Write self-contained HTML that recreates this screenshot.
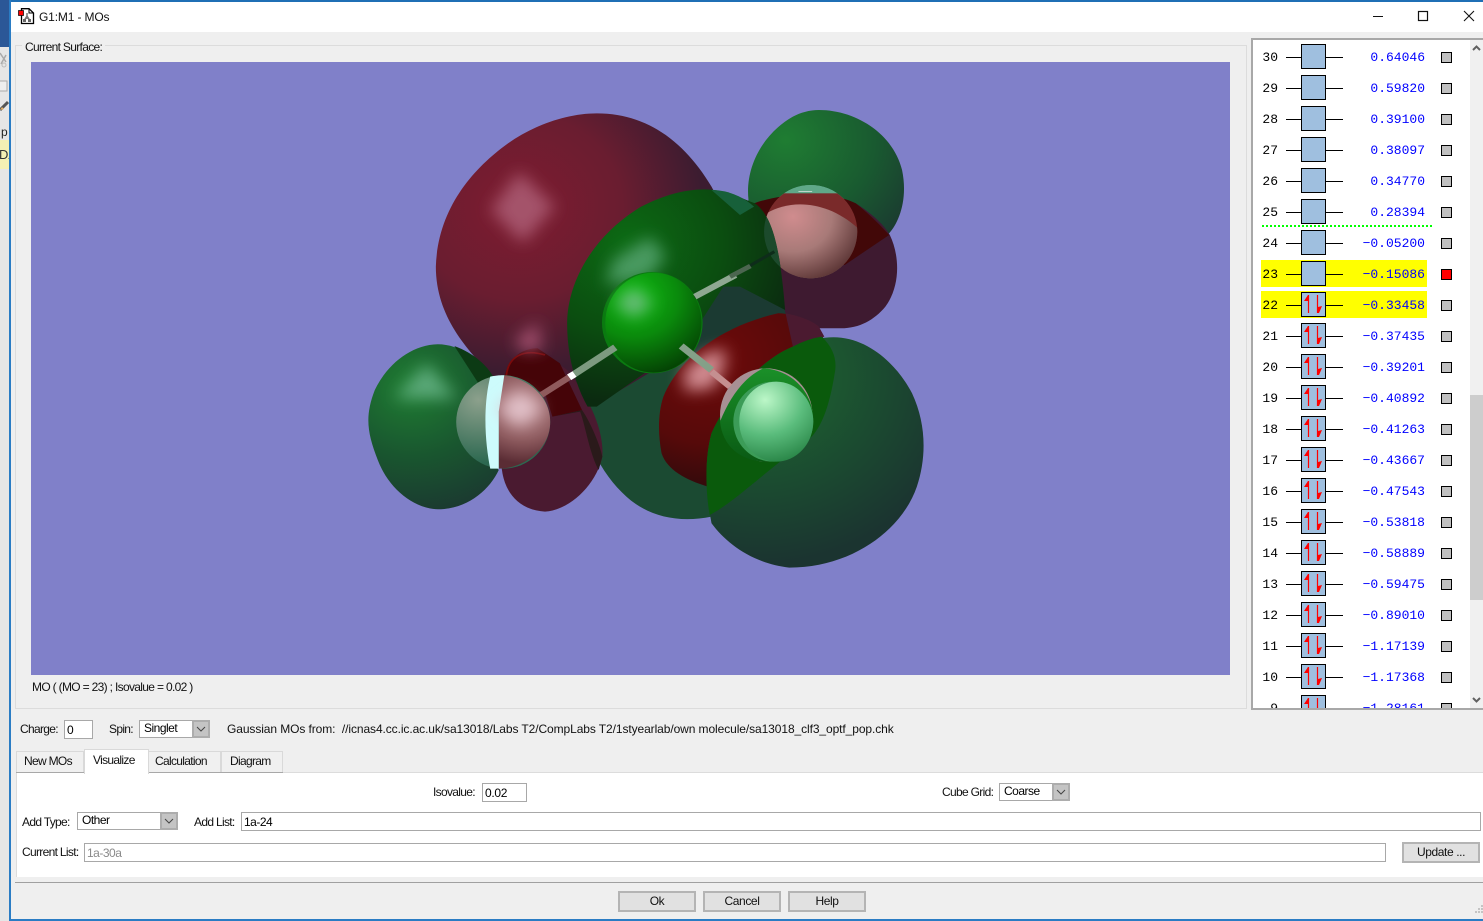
<!DOCTYPE html>
<html><head><meta charset="utf-8"><title>G1:M1 - MOs</title>
<style>
html,body{margin:0;padding:0;width:1483px;height:921px;overflow:hidden;background:#efefef;}
body{position:relative;font-family:"Liberation Sans",sans-serif;font-size:12px;color:#000;}
.a{position:absolute;box-sizing:border-box;}
.t{position:absolute;white-space:nowrap;line-height:14px;letter-spacing:-.68px;color:#111;}
.i{position:absolute;box-sizing:border-box;background:#fff;border:1px solid #a8a8a8;letter-spacing:-.5px;}
.cb{position:absolute;box-sizing:border-box;background:#c4c4c4;border:1px solid #adadad;border-width:2px;width:18px;}
.cb svg{position:absolute;left:2px;top:2px;}
.btn{position:absolute;box-sizing:border-box;background:#e1e1e1;border:2px solid #b4b4b4;text-align:center;line-height:17px;letter-spacing:-.4px;color:#111;}
.r{position:absolute;left:0;width:217px;height:24px;font-family:"Liberation Mono",monospace;font-size:13px;line-height:27px;}
.n{position:absolute;left:0;width:25px;text-align:right;color:#000;}
.l{position:absolute;left:33px;top:13px;width:57px;height:1px;background:#000;}
.b{position:absolute;left:48px;top:0;width:25px;height:25px;box-sizing:border-box;background:#9fbfdf;border:1px solid #000;}
.b svg{position:absolute;left:0;top:0;}
.v{position:absolute;left:90px;width:82px;text-align:right;color:#0000ff;}
.s{position:absolute;left:188px;top:8px;width:11px;height:11px;box-sizing:border-box;background:#c0c0c0;border:1px solid #000;}
.y{position:absolute;left:8px;width:166px;height:27px;background:#ffff00;}
</style></head><body>

<!-- background app fragment -->
<div class="a" style="left:0;top:0;width:10px;height:47px;background:#2b5797"></div>
<div class="a" style="left:0;top:47px;width:10px;height:874px;background:#e6e6e6"></div>
<div class="a" style="left:0;top:140px;width:10px;height:29px;background:#f4f0b4;overflow:hidden"><div class="t" style="left:-1px;top:8px;font-size:13px;color:#333;letter-spacing:0">DA</div></div>
<div class="t" style="left:1px;top:125px;color:#222;font-size:12px">p</div>
<svg class="a" style="left:0;top:50px" width="9" height="70"><path d="M0 3L6 12M6 5L1 14" stroke="#aaa" stroke-width="1.5" fill="none"/><circle cx="4" cy="15" r="2" fill="none" stroke="#bbb"/><rect x="-2" y="31" width="9" height="10" fill="#eee" stroke="#aaa"/><path d="M0 60L8 52" stroke="#555" stroke-width="3"/><path d="M0 60l2-3 2 2z" fill="#e8b060"/></svg>

<!-- window frame -->
<div class="a" style="left:9px;top:0;width:1474px;height:2px;background:#1f6fb5"></div>
<div class="a" style="left:9px;top:2px;width:1474px;height:30px;background:#fff"></div>
<div class="a" style="left:9px;top:0;width:1.5px;height:921px;background:#2a7cc4"></div>
<div class="a" style="left:9px;top:919px;width:1474px;height:2px;background:#2a7cc4"></div>

<svg class="a" style="left:18px;top:8px" width="17" height="17"><path d="M3.500 .7H11L15.500 5V15.500H3.500Z" fill="#fff" stroke="#000" stroke-width="1.300"/><path d="M11 .7V5H15.500" fill="none" stroke="#000"/><rect x=".5" y="2.500" width="5" height="5" fill="#f00" stroke="#000" stroke-width=".7"/><path d="M9 5V11M9 8L6.500 12M9 8L11.500 12" stroke="#777" stroke-width="1.500"/><rect x="5" y="11" width="3" height="3" fill="#666"/><rect x="10" y="11" width="3" height="3" fill="#666"/></svg>
<div class="t" style="left:39px;top:10px;font-size:12px;letter-spacing:-.15px">G1:M1 - MOs</div>
<svg class="a" style="left:1370px;top:8px" width="110" height="16"><path d="M3 8.500H13" stroke="#111"/><rect x="48.500" y="3.500" width="9" height="9" fill="none" stroke="#111" stroke-width="1.200"/><path d="M94 3L104 13M104 3L94 13" stroke="#111" stroke-width="1.100" fill="none"/></svg>

<!-- group box -->
<div class="a" style="left:15px;top:45px;width:1232px;height:664px;border:1px solid #dcdcdc"></div>
<div class="t" style="left:22px;top:40px;padding:0 3px;background:#efefef">Current Surface:</div>

<!-- GL canvas -->
<svg class="a" style="left:31px;top:62px" width="1199" height="613" viewBox="31 62 1199 613">
<defs>
<radialGradient id="rr" gradientUnits="userSpaceOnUse" cx="430" cy="320" r="620"><stop offset="0" stop-color="#7e1c30"/><stop offset=".45" stop-color="#6a1d30"/><stop offset=".8" stop-color="#3c1c30"/><stop offset="1" stop-color="#3a1b2e"/></radialGradient>
<radialGradient id="gl" gradientUnits="userSpaceOnUse" cx="140" cy="860" r="380"><stop offset="0" stop-color="#1f7d32"/><stop offset=".55" stop-color="#19562f"/><stop offset="1" stop-color="#1b3a30"/></radialGradient>
<radialGradient id="gu" gradientUnits="userSpaceOnUse" cx="1150" cy="120" r="400"><stop offset="0" stop-color="#1f7d32"/><stop offset=".6" stop-color="#195a30"/><stop offset="1" stop-color="#1b3a30"/></radialGradient>
<radialGradient id="gb" gradientUnits="userSpaceOnUse" cx="1080" cy="830" r="560"><stop offset="0" stop-color="#1d6a30"/><stop offset=".6" stop-color="#1b4a30"/><stop offset="1" stop-color="#1b3430"/></radialGradient>
<radialGradient id="gc" gradientUnits="userSpaceOnUse" cx="720" cy="430" r="480"><stop offset="0" stop-color="#0c6a14"/><stop offset=".55" stop-color="#0b4d10"/><stop offset="1" stop-color="#0b2a10"/></radialGradient>
<radialGradient id="rb" gradientUnits="userSpaceOnUse" cx="950" cy="780" r="420"><stop offset="0" stop-color="#6e0a0a"/><stop offset=".6" stop-color="#560a0a"/><stop offset="1" stop-color="#2a0a0c"/></radialGradient>
<radialGradient id="cl" gradientUnits="userSpaceOnUse" cx="740" cy="590" r="240"><stop offset="0" stop-color="#10bb12"/><stop offset=".5" stop-color="#0a8a0c"/><stop offset="1" stop-color="#044204"/></radialGradient>
<radialGradient id="ph" gradientUnits="userSpaceOnUse" cx="1170" cy="350" r="210"><stop offset="0" stop-color="#d08c8e"/><stop offset=".5" stop-color="#a87a78"/><stop offset="1" stop-color="#563030"/></radialGradient>
<radialGradient id="pl" gradientUnits="userSpaceOnUse" cx="440" cy="920" r="170"><stop offset="0" stop-color="#c89a9e"/><stop offset=".6" stop-color="#8d5a5e"/><stop offset="1" stop-color="#5a2c34"/></radialGradient>
<radialGradient id="ql" gradientUnits="userSpaceOnUse" cx="320" cy="900" r="190"><stop offset="0" stop-color="#8ca08c"/><stop offset="1" stop-color="#2c6850"/></radialGradient>
<radialGradient id="pg" gradientUnits="userSpaceOnUse" cx="1095" cy="900" r="210"><stop offset="0" stop-color="#bcf7c8"/><stop offset=".5" stop-color="#5abc7c"/><stop offset="1" stop-color="#1f7a3c"/></radialGradient>
<linearGradient id="og" gradientUnits="userSpaceOnUse" x1="1090" y1="810" x2="1090" y2="1085"><stop offset="0" stop-color="#1a8f28"/><stop offset="1" stop-color="#0a5a14"/></linearGradient>
<clipPath id="us"><ellipse cx="1218" cy="395" rx="126" ry="140"/></clipPath>
<filter id="bl" x="-80%" y="-80%" width="260%" height="260%"><feGaussianBlur stdDeviation="22"/></filter>
</defs>
<rect x="31" y="62" width="1199" height="613" fill="#8080c9"/>
<g transform="translate(360 100) scale(.37 .3333)">
<!-- lower-center green lobe -->
<path d="M590 880C600 1010 650 1120 720 1190C780 1250 860 1270 950 1250C1100 1210 1240 1020 1285 780L1150 640L900 560L660 800Z" fill="#1b4a32"/>
<!-- big red lobe -->
<path d="M640 40C780 40 880 130 950 260C1010 380 1000 600 930 720L660 900L590 880L360 830C290 750 205 650 205 500C210 330 300 210 400 130C470 75 560 40 640 40Z" fill="url(#rr)"/>
<path d="M900 670L960 500H1060L1170 640L1000 690L860 790Z" fill="#1b3a32"/>
<!-- left lower red -->
<path d="M410 780C460 735 500 760 560 810C610 880 660 980 655 1070C640 1150 570 1230 500 1235C430 1230 395 1180 385 1120C370 1020 375 880 410 780Z" fill="#4a1a30"/>
<path d="M520 950L600 930C625 970 650 1040 655 1070L645 1110C620 1060 610 980 595 935Z" fill="#2a1a1a"/>
<path d="M390 830C405 770 440 745 480 745L540 790L600 930L520 950L500 880Z" fill="#450408"/>
<path d="M395 830C400 770 440 745 500 765" fill="none" stroke="#7a0a0a" stroke-width="5"/>
<path d="M420 720L480 665L490 750L440 755Z" fill="#a04e6c" filter="url(#bl)"/>
<!-- left green lobe -->
<path d="M210 733C270 733 330 780 360 830C340 880 300 1000 375 1110C350 1170 290 1228 210 1228C140 1225 75 1160 48 1080C20 1000 12 950 40 870C75 790 140 735 210 733Z" fill="url(#gl)"/>
<path d="M255 738C310 760 345 800 360 830L320 850Z" fill="#0c3a14"/>
<path d="M180 790L260 895L95 895Z" fill="#5aa878" filter="url(#bl)"/>
<path d="M430 215L525 320L440 430L355 330Z" fill="#a4526a" filter="url(#bl)"/>
<!-- upper right green lobe -->
<path d="M1240 30C1340 30 1440 100 1465 210C1482 300 1455 370 1430 400L1150 560L1030 345L1050 300C1040 200 1090 100 1170 50C1190 38 1215 30 1240 30Z" fill="url(#gu)"/>
<!-- upper right red -->
<path d="M1065 310C1150 280 1280 280 1340 310C1390 345 1420 380 1432 405C1460 470 1460 560 1420 620C1390 660 1350 685 1300 685H1240L1150 640L1100 440Z" fill="#3e1a30"/>
<ellipse cx="1218" cy="395" rx="126" ry="140" fill="#5fa888"/>
<path d="M1065 310C1150 275 1280 275 1340 310C1380 345 1410 380 1430 405L1310 495L1140 440Z" fill="#420808"/>
<g clip-path="url(#us)">
<rect x="1080" y="278" width="280" height="270" fill="#7a2a2a"/>
<rect x="1080" y="240" width="280" height="40" fill="#5fa888"/>
<path d="M1099 340C1162 298 1261 300 1346 385V550H1085Z" fill="url(#ph)"/>
</g>
<path d="M1185 274H1222" stroke="#eee" stroke-width="2"/>
<!-- central green -->
<path d="M930 268C990 268 1030 295 1068 310C1115 350 1135 440 1149 630L1027 560H982L924 660L820 780L640 920L615 920C580 850 558 760 560 660C565 530 640 400 760 320C820 285 880 268 930 268Z" fill="url(#gc)"/>
<path d="M950 270C1000 270 1040 295 1065 320L1027 345Z" fill="#17603a"/>
<g clip-path="url(#us)"><path d="M1068 310C1115 350 1135 440 1149 630H1000V310Z" fill="#1c4a2c"/></g>
<path d="M785 410L825 470L780 535L665 555L685 480Z" fill="#4a9a60" filter="url(#bl)"/>
<!-- red bowl lower right -->
<path d="M1130 640C1180 640 1220 670 1250 710L1285 780C1280 920 1240 1010 1130 1090C1070 1130 1000 1165 940 1160C880 1140 830 1110 815 1060C805 1000 805 940 820 890C860 780 970 680 1130 640Z" fill="url(#rb)"/>
<path d="M1150 640C1195 650 1225 665 1240 680L1255 710L1170 740Z" fill="#4b1a30"/>
<!-- lower right green -->
<path d="M1280 712C1370 712 1450 790 1492 880C1530 970 1532 1070 1505 1160C1465 1290 1330 1403 1160 1403C1060 1390 990 1330 950 1270C935 1180 930 1080 950 1000C990 900 1080 780 1170 740C1210 720 1250 712 1280 712Z" fill="url(#gb)"/>
<path d="M1248 710C1280 745 1290 780 1283 820C1270 910 1250 980 1216 1015L1130 1090C1040 1170 990 1220 945 1245C935 1180 930 1080 950 1000C990 900 1080 780 1170 740C1195 725 1220 715 1248 710Z" fill="#0a5a0c"/>
<path d="M935 760L985 745L985 800L955 865L880 875L875 810Z" fill="#d08a90" filter="url(#bl)"/>
<!-- atoms -->
<ellipse cx="790" cy="668" rx="136" ry="152" fill="#0a7a10"/>
<ellipse cx="793" cy="668" rx="130" ry="150" fill="url(#cl)"/>
<path d="M740 560L790 610L740 655L690 610Z" fill="#6abc7c" filter="url(#bl)"/>
<ellipse cx="387" cy="966" rx="127" ry="140" fill="url(#ql)"/>
<path d="M375 826C440 826 514 880 514 966C514 1050 440 1106 375 1106Z" fill="url(#pl)"/>
<path d="M352 830C370 826 380 826 390 826L375 935V1106H352C340 1040 330 930 352 830Z" fill="#cdfbfc"/>
<path d="M430 875L490 925L430 980L375 925Z" fill="#e0c0c8" filter="url(#bl)"/>
<ellipse cx="1098" cy="945" rx="125" ry="140" fill="#a89094"/>
<path d="M973 965C1000 890 1040 830 1090 805C1170 810 1225 880 1225 960C1225 1040 1170 1085 1100 1085C1030 1085 980 1040 973 965Z" fill="url(#og)"/>
<ellipse cx="1117" cy="965" rx="108" ry="120" fill="#3c9c58"/>
<ellipse cx="1125" cy="965" rx="100" ry="120" fill="url(#pg)"/>
<!-- bonds -->
<path d="M905 592L1120 455" stroke="#0e2c1a" stroke-width="9"/>
<path d="M905 590L1015 525" stroke="#8fa892" stroke-width="18"/>
<path d="M1000 530L1055 498" stroke="#4c6650" stroke-width="14"/>
<path d="M690 742L580 822" stroke="#7d9a80" stroke-width="20"/>
<path d="M580 822L565 832" stroke="#fff" stroke-width="20"/>
<path d="M565 832L490 885" stroke="#8f5a5c" stroke-width="18"/>
<path d="M868 738L950 810" stroke="#84a088" stroke-width="20"/>
<path d="M950 815L1000 860" stroke="#c58f90" stroke-width="18"/>
</g>
</svg>

<div class="t" style="left:32px;top:680px;letter-spacing:-.67px">MO ( (MO = 23) ; Isovalue = 0.02 )</div>

<!-- MO list panel -->
<div class="a" style="left:1251px;top:38px;width:232px;height:672px;border:2px solid #a8a8a8;border-right:0;background:#fff;overflow:hidden">
<div class="y" style="left:8px;top:220px"></div>
<div class="y" style="left:8px;top:251px"></div>
<div class="a" style="left:9px;top:185px;width:170px;height:0;border-top:2px dotted #00ff00"></div>

<div class="r" style="top:4px"><span class="n">30</span><i class="l"></i><i class="b"></i><span class="v">0.64046</span><i class="s"></i></div>
<div class="r" style="top:35px"><span class="n">29</span><i class="l"></i><i class="b"></i><span class="v">0.59820</span><i class="s"></i></div>
<div class="r" style="top:66px"><span class="n">28</span><i class="l"></i><i class="b"></i><span class="v">0.39100</span><i class="s"></i></div>
<div class="r" style="top:97px"><span class="n">27</span><i class="l"></i><i class="b"></i><span class="v">0.38097</span><i class="s"></i></div>
<div class="r" style="top:128px"><span class="n">26</span><i class="l"></i><i class="b"></i><span class="v">0.34770</span><i class="s"></i></div>
<div class="r" style="top:159px"><span class="n">25</span><i class="l"></i><i class="b"></i><span class="v">0.28394</span><i class="s"></i></div>
<div class="r" style="top:190px"><span class="n">24</span><i class="l"></i><i class="b"></i><span class="v">−0.05200</span><i class="s"></i></div>
<div class="r" style="top:221px"><span class="n">23</span><i class="l"></i><i class="b"></i><span class="v">−0.15086</span><i class="s" style="background:#ff0000"></i></div>
<div class="r" style="top:252px"><span class="n">22</span><i class="l"></i><i class="b"><svg width="23" height="23"><path d="M6.500 2V20M15.500 2V20" stroke="#f00" stroke-width="1.200"/><path d="M6 2L2 8H6ZM16 20V14L20 13L17 20Z" fill="#f00"/></svg></i><span class="v">−0.33458</span><i class="s"></i></div>
<div class="r" style="top:283px"><span class="n">21</span><i class="l"></i><i class="b"><svg width="23" height="23"><path d="M6.500 2V20M15.500 2V20" stroke="#f00" stroke-width="1.200"/><path d="M6 2L2 8H6ZM16 20V14L20 13L17 20Z" fill="#f00"/></svg></i><span class="v">−0.37435</span><i class="s"></i></div>
<div class="r" style="top:314px"><span class="n">20</span><i class="l"></i><i class="b"><svg width="23" height="23"><path d="M6.500 2V20M15.500 2V20" stroke="#f00" stroke-width="1.200"/><path d="M6 2L2 8H6ZM16 20V14L20 13L17 20Z" fill="#f00"/></svg></i><span class="v">−0.39201</span><i class="s"></i></div>
<div class="r" style="top:345px"><span class="n">19</span><i class="l"></i><i class="b"><svg width="23" height="23"><path d="M6.500 2V20M15.500 2V20" stroke="#f00" stroke-width="1.200"/><path d="M6 2L2 8H6ZM16 20V14L20 13L17 20Z" fill="#f00"/></svg></i><span class="v">−0.40892</span><i class="s"></i></div>
<div class="r" style="top:376px"><span class="n">18</span><i class="l"></i><i class="b"><svg width="23" height="23"><path d="M6.500 2V20M15.500 2V20" stroke="#f00" stroke-width="1.200"/><path d="M6 2L2 8H6ZM16 20V14L20 13L17 20Z" fill="#f00"/></svg></i><span class="v">−0.41263</span><i class="s"></i></div>
<div class="r" style="top:407px"><span class="n">17</span><i class="l"></i><i class="b"><svg width="23" height="23"><path d="M6.500 2V20M15.500 2V20" stroke="#f00" stroke-width="1.200"/><path d="M6 2L2 8H6ZM16 20V14L20 13L17 20Z" fill="#f00"/></svg></i><span class="v">−0.43667</span><i class="s"></i></div>
<div class="r" style="top:438px"><span class="n">16</span><i class="l"></i><i class="b"><svg width="23" height="23"><path d="M6.500 2V20M15.500 2V20" stroke="#f00" stroke-width="1.200"/><path d="M6 2L2 8H6ZM16 20V14L20 13L17 20Z" fill="#f00"/></svg></i><span class="v">−0.47543</span><i class="s"></i></div>
<div class="r" style="top:469px"><span class="n">15</span><i class="l"></i><i class="b"><svg width="23" height="23"><path d="M6.500 2V20M15.500 2V20" stroke="#f00" stroke-width="1.200"/><path d="M6 2L2 8H6ZM16 20V14L20 13L17 20Z" fill="#f00"/></svg></i><span class="v">−0.53818</span><i class="s"></i></div>
<div class="r" style="top:500px"><span class="n">14</span><i class="l"></i><i class="b"><svg width="23" height="23"><path d="M6.500 2V20M15.500 2V20" stroke="#f00" stroke-width="1.200"/><path d="M6 2L2 8H6ZM16 20V14L20 13L17 20Z" fill="#f00"/></svg></i><span class="v">−0.58889</span><i class="s"></i></div>
<div class="r" style="top:531px"><span class="n">13</span><i class="l"></i><i class="b"><svg width="23" height="23"><path d="M6.500 2V20M15.500 2V20" stroke="#f00" stroke-width="1.200"/><path d="M6 2L2 8H6ZM16 20V14L20 13L17 20Z" fill="#f00"/></svg></i><span class="v">−0.59475</span><i class="s"></i></div>
<div class="r" style="top:562px"><span class="n">12</span><i class="l"></i><i class="b"><svg width="23" height="23"><path d="M6.500 2V20M15.500 2V20" stroke="#f00" stroke-width="1.200"/><path d="M6 2L2 8H6ZM16 20V14L20 13L17 20Z" fill="#f00"/></svg></i><span class="v">−0.89010</span><i class="s"></i></div>
<div class="r" style="top:593px"><span class="n">11</span><i class="l"></i><i class="b"><svg width="23" height="23"><path d="M6.500 2V20M15.500 2V20" stroke="#f00" stroke-width="1.200"/><path d="M6 2L2 8H6ZM16 20V14L20 13L17 20Z" fill="#f00"/></svg></i><span class="v">−1.17139</span><i class="s"></i></div>
<div class="r" style="top:624px"><span class="n">10</span><i class="l"></i><i class="b"><svg width="23" height="23"><path d="M6.500 2V20M15.500 2V20" stroke="#f00" stroke-width="1.200"/><path d="M6 2L2 8H6ZM16 20V14L20 13L17 20Z" fill="#f00"/></svg></i><span class="v">−1.17368</span><i class="s"></i></div>
<div class="r" style="top:655px"><span class="n">9</span><i class="l"></i><i class="b"><svg width="23" height="23"><path d="M6.500 2V20M15.500 2V20" stroke="#f00" stroke-width="1.200"/><path d="M6 2L2 8H6ZM16 20V14L20 13L17 20Z" fill="#f00"/></svg></i><span class="v">−1.28161</span><i class="s"></i></div>

<!-- scrollbar -->
<div class="a" style="left:217px;top:0;width:13px;height:670px;background:#f0f0f0"></div>
<div class="a" style="left:217px;top:355px;width:13px;height:205px;background:#cdcdcd"></div>
<svg class="a" style="left:217px;top:0" width="13" height="670"><path d="M3 10L6.500 6.500L10 10" fill="none" stroke="#606060" stroke-width="2"/><path d="M3 658L6.500 661.500L10 658" fill="none" stroke="#606060" stroke-width="2"/></svg>
</div>

<!-- charge row -->
<div class="t" style="left:20px;top:722px">Charge:</div>
<div class="i" style="left:64px;top:720px;width:29px;height:19px;padding:2px 2px;line-height:15px">0</div>
<div class="t" style="left:109px;top:722px">Spin:</div>
<div class="i" style="left:139px;top:720px;width:71px;height:18px;padding:0 4px;line-height:15px">Singlet</div>
<div class="cb" style="left:192px;top:720px;height:18px"><svg width="10" height="10"><path d="M1 3L5 7L9 3" fill="none" stroke="#444"/></svg></div>
<div class="t" style="left:227px;top:722px;letter-spacing:-.09px">Gaussian MOs from:&nbsp; //icnas4.cc.ic.ac.uk/sa13018/Labs T2/CompLabs T2/1styearlab/own molecule/sa13018_clf3_optf_pop.chk</div>

<!-- tabs -->
<div class="a" style="left:16px;top:751px;width:68px;height:22px;background:#f0f0f0;border:1px solid #d9d9d9;border-bottom:0"></div>
<div class="a" style="left:148px;top:751px;width:73px;height:22px;background:#f0f0f0;border:1px solid #d9d9d9;border-bottom:0"></div>
<div class="a" style="left:221px;top:751px;width:62px;height:22px;background:#f0f0f0;border:1px solid #d9d9d9;border-bottom:0"></div>
<div class="a" style="left:16px;top:772px;width:1467px;height:105px;background:#fff;border-top:1px solid #dcdcdc;border-left:1px solid #dcdcdc"></div>
<div class="a" style="left:16px;top:772px;width:267px;height:1px;background:#a8a8a8"></div>
<div class="a" style="left:84px;top:749px;width:65px;height:25px;background:#fff;border:1px solid #d9d9d9;border-bottom:0"></div>
<div class="t" style="left:24px;top:754px">New MOs</div>
<div class="t" style="left:93px;top:753px">Visualize</div>
<div class="t" style="left:155px;top:754px">Calculation</div>
<div class="t" style="left:230px;top:754px">Diagram</div>

<!-- visualize pane -->
<div class="t" style="left:433px;top:785px">Isovalue:</div>
<div class="i" style="left:482px;top:783px;width:45px;height:19px;padding:2px 2px;line-height:15px;letter-spacing:-.3px">0.02</div>
<div class="t" style="left:942px;top:785px">Cube Grid:</div>
<div class="i" style="left:999px;top:783px;width:71px;height:18px;padding:0 4px;line-height:15px">Coarse</div>
<div class="cb" style="left:1052px;top:783px;height:18px"><svg width="10" height="10"><path d="M1 3L5 7L9 3" fill="none" stroke="#444"/></svg></div>

<div class="t" style="left:22px;top:815px">Add Type:</div>
<div class="i" style="left:77px;top:812px;width:101px;height:18px;padding:0 4px;line-height:15px">Other</div>
<div class="cb" style="left:160px;top:812px;height:18px"><svg width="10" height="10"><path d="M1 3L5 7L9 3" fill="none" stroke="#444"/></svg></div>
<div class="t" style="left:194px;top:815px">Add List:</div>
<div class="i" style="left:241px;top:812px;width:1240px;height:19px;padding:2px 2px;line-height:15px">1a-24</div>

<div class="t" style="left:22px;top:845px">Current List:</div>
<div class="i" style="left:84px;top:843px;width:1302px;height:19px;padding:2px 2px;line-height:15px;color:#8a8a8a">1a-30a</div>
<div class="btn" style="left:1402px;top:842px;width:78px;height:21px">Update ...</div>

<div class="a" style="left:15px;top:882px;width:1468px;height:1px;background:#a0a0a0"></div>
<div class="btn" style="left:618px;top:891px;width:78px;height:21px">Ok</div>
<div class="btn" style="left:703px;top:891px;width:78px;height:21px">Cancel</div>
<div class="btn" style="left:788px;top:891px;width:78px;height:21px">Help</div>
<svg class="a" style="left:1475px;top:905px" width="8" height="13"><path d="M6 0h2v2H6zM3 3h2v2H3zM6 3h2v2H6zM0 6h2v2H0zM3 6h2v2H3zM6 6h2v2H6z" fill="#c4c4c4"/></svg>
</body></html>
